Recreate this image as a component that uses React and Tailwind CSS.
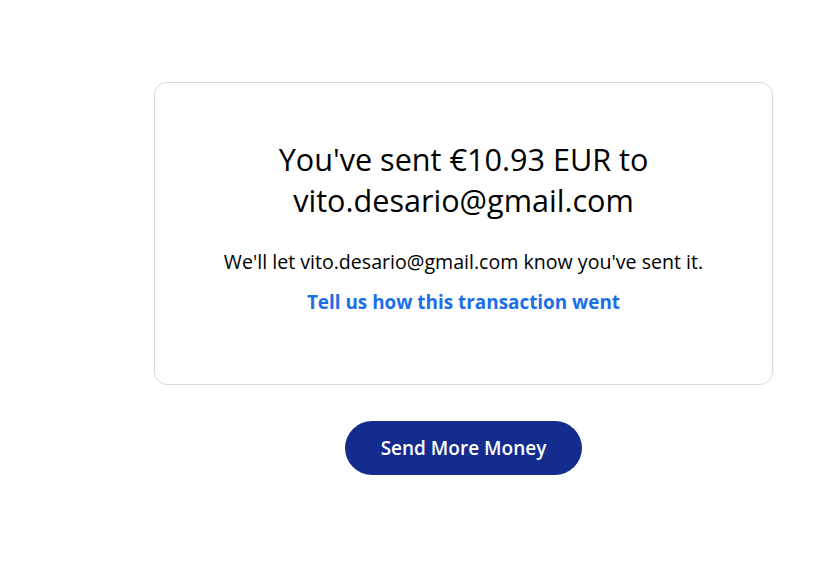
export default function App() {
  return (
    <div
      className="w-[828px] h-[562px] bg-white pl-[154px] pr-[55px] pt-[82px]"
      style={{ fontFamily: "'Open Sans', 'Noto Sans', sans-serif" }}
    >
      <div className="border border-[#dbd8d0] rounded-[13px] h-[303px] flex flex-col items-center pt-[56px]">
        <h1 className="text-[30.6px] leading-[41px] text-center text-black">
          You've sent €10.93 EUR to
          <br />
          vito.desario@gmail.com
        </h1>
        <p className="mt-[29px] text-[19.6px] leading-[24px] text-black">
          We'll let vito.desario@gmail.com know you've sent it.
        </p>
        <a className="mt-[16px] text-[18.9px] leading-[24px] font-bold text-[#1a6fe8] cursor-pointer">
          Tell us how this transaction went
        </a>
      </div>
      <div className="flex justify-center mt-[36px]">
        <button className="w-[237px] h-[54px] rounded-full bg-[#142c8e] text-white text-[19px] font-semibold pt-[1px]">
          Send More Money
        </button>
      </div>
    </div>
  );
}
